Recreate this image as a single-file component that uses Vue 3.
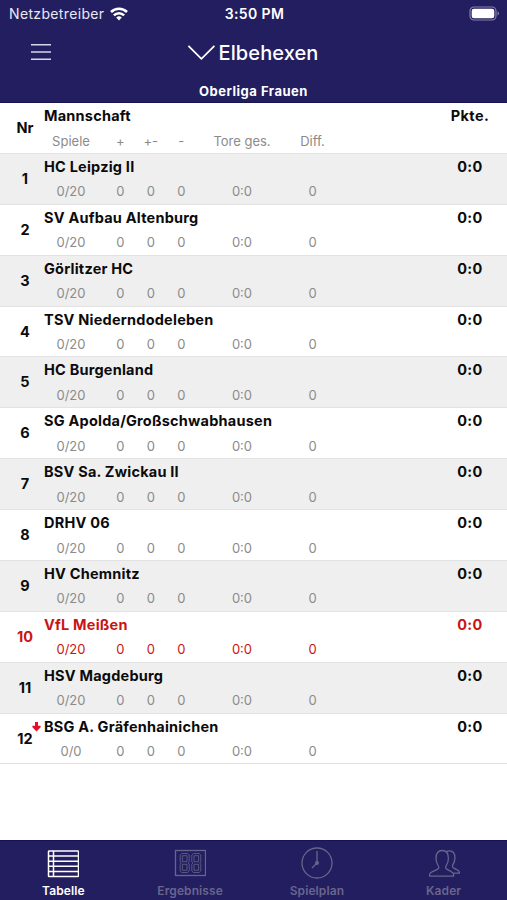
<script setup>
import { ref } from 'vue'

const activeTab = ref('Tabelle')

const tabs = ['Tabelle', 'Ergebnisse', 'Spielplan', 'Kader']

const teams = [
  { name: 'HC Leipzig II', games: '0/20' },
  { name: 'SV Aufbau Altenburg', games: '0/20' },
  { name: 'Görlitzer HC', games: '0/20' },
  { name: 'TSV Niederndodeleben', games: '0/20' },
  { name: 'HC Burgenland', games: '0/20' },
  { name: 'SG Apolda/Großschwabhausen', games: '0/20' },
  { name: 'BSV Sa. Zwickau II', games: '0/20' },
  { name: 'DRHV 06', games: '0/20' },
  { name: 'HV Chemnitz', games: '0/20' },
  { name: 'VfL Meißen', games: '0/20', own: true },
  { name: 'HSV Magdeburg', games: '0/20' },
  { name: 'BSG A. Gräfenhainichen', games: '0/0', down: true }
]
</script>

<template>
  <div class="screen">
    <header>
      <div class="status">
        <div class="carrier">
          <span>Netzbetreiber</span>
          <svg width="18" height="14" viewBox="0 0 18 14" fill="none" stroke="#fff" stroke-width="2.6">
            <path d="M1 5a11.4 11.4 0 0 1 16 0" />
            <path d="M3.9 8.3a7.2 7.2 0 0 1 10.2 0" />
            <path d="M9 13.4 6.2 10.6a4 4 0 0 1 5.6 0z" fill="#fff" stroke="none" />
          </svg>
        </div>
        <span class="time">3:50 PM</span>
        <svg class="battery" width="31" height="15" viewBox="0 0 31 15">
          <rect x="1" y="1" width="26" height="13" rx="4" fill="none" stroke="#8582ab" stroke-width="1.2" />
          <rect x="2.7" y="2.7" width="22.6" height="9.6" rx="2.3" fill="#fff" />
          <path d="M28.5 5.3q3 2.2 0 4.4z" fill="#8582ab" />
        </svg>
      </div>
      <div class="nav">
        <svg class="menu" width="20" height="18" viewBox="0 0 20 18" stroke="#d6d4ea" stroke-width="1.6">
          <path d="M0 .6h20M0 8h20M0 15.200h20" />
        </svg>
        <div class="title">
          <svg width="28" height="16" viewBox="0 0 28 16" fill="none" stroke="#fff" stroke-width="1.8">
            <path d="M.4 .8 13.400 13.800 26.400 .8" />
          </svg>
          <h1>Elbehexen</h1>
        </div>
      </div>
      <h2>Oberliga Frauen</h2>
    </header>

    <main>
      <div class="row head">
        <div class="nr">Nr</div>
        <div class="team">
          <div class="name">Mannschaft</div>
          <div class="stats">
            <span>Spiele</span><span>+</span><span>+-</span><span>-</span><span>Tore ges.</span><span>Diff.</span>
          </div>
        </div>
        <div class="points">Pkte.</div>
      </div>
      <div v-for="(team, i) in teams" :key="team.name" class="row" :class="{ own: team.own }">
        <div class="nr">
          {{ i + 1 }}
          <svg v-if="team.down" class="down" width="9" height="10" viewBox="0 0 9 10">
            <path d="M3 0h3v3.700h2.600v1.600L4.500 9.600.4 5.300V3.700H3z" fill="#e3122b" />
          </svg>
        </div>
        <div class="team">
          <div class="name">{{ team.name }}</div>
          <div class="stats">
            <span>{{ team.games }}</span><span>0</span><span>0</span><span>0</span><span>0:0</span><span>0</span>
          </div>
        </div>
        <div class="points">0:0</div>
      </div>
    </main>

    <nav class="tabs">
      <button
        v-for="tab in tabs"
        :key="tab"
        :class="{ active: tab === activeTab }"
        @click="activeTab = tab"
      >
        <svg width="32" height="32" viewBox="0 0 32 32" fill="none" stroke="currentColor" stroke-width="1.3">
          <template v-if="tab === 'Tabelle'">
            <rect x="1.5" y="4" width="30" height="25.5" rx="0.6" stroke-width="1.5" />
            <path d="M6.500 4v25.500M1.500 9.100h30M1.500 14.200h30M1.500 19.300h30M1.500 24.400h30" stroke-width="1.5" />
          </template>
          <template v-else-if="tab === 'Ergebnisse'">
            <rect x="1.5" y="3.5" width="30" height="25" />
            <!-- two seven-segment digits -->
            <g stroke-width="0.8">
              <path d="M7.800 6.500h5.700l1.700 1.500v6.800L14.200 16l1 1.200V24l-1.700 1.500H7.800L6.200 24v-6.800l1-1.200-1-1.200V8z" />
              <path d="M8.400 8.700h4.600v6H8.400zM8.400 17.300h4.600v6H8.400z" />
              <path d="M19.400 6.500h5.700l1.700 1.500v6.800L25.800 16l1 1.200V24l-1.700 1.500h-5.700L17.800 24v-6.800l1-1.200-1-1.200V8z" />
              <path d="M20 8.700h4.600v6H20zM20 17.300h4.600v6H20z" />
            </g>
          </template>
          <template v-else-if="tab === 'Spielplan'">
            <circle cx="16" cy="16" r="15" />
            <path d="M16 4v12l-5 5" />
            <circle cx="16" cy="16" r="1.3" fill="currentColor" />
          </template>
          <template v-else>
            <path d="M1.600 29.200v-1.400c0-1.600.8-2.300 2.400-3l4.400-1.900c2.600-1.100 2.900-2.600 1.700-4.400C8.700 16.300 8 14.300 8 11.200c0-5 2.200-7.700 6.200-7.700s6.200 2.700 6.200 7.700c0 3.100-.7 5.100-2.100 7.300-1.200 1.800-.9 3.300 1.700 4.400l3.400 1.900c1.400.7 2.200 1.400 2.200 3v1.400z" />
            <path d="M18 4.900c1.200-.9 2.400-1.200 3.700-1.100 3.500.2 5.200 2.700 5.200 6.900 0 2.800-.5 4.600-1.800 6.600-1.100 1.700-.8 3.200 1.200 4.100l3 1.500c1.500.7 2.200 1.400 2.200 3.300h-6" />
          </template>
        </svg>
        <span>{{ tab }}</span>
      </button>
    </nav>
  </div>
</template>

<style>
body {
  margin: 0;
  background: #fff;
}
</style>

<style scoped>
.screen {
  display: flex;
  flex-direction: column;
  width: 507px;
  height: 900px;
  overflow: hidden;
  font-family: Inter, 'Liberation Sans', sans-serif;
}

header {
  box-sizing: border-box;
  height: 103px;
  background: #231e5f;
  border-bottom: 1px solid #19144f;
  color: #fff;
  flex: none;
}

.status {
  display: grid;
  grid-template-columns: 1fr auto 1fr;
  align-items: center;
  height: 27px;
  padding: 0 7px 0 9px;
}

.carrier {
  display: flex;
  align-items: center;
  gap: 6px;
  color: #e9e8f4;
  font-size: 14px;
  letter-spacing: 0.35px;
}

.time {
  font-size: 14px;
  font-weight: 600;
  letter-spacing: 0.4px;
}

.battery {
  justify-self: end;
}

.nav {
  display: grid;
  grid-template-columns: 1fr auto 1fr;
  align-items: center;
  height: 52px;
  padding: 0 32px 0 31px;
}

.title {
  display: flex;
  align-items: center;
  gap: 3px;
}

h1 {
  margin: 0;
  font-size: 20px;
  font-weight: 500;
  letter-spacing: 0.1px;
}

h2 {
  margin: 0;
  font-size: 13px;
  font-weight: 700;
  line-height: 24px;
  letter-spacing: 0.5px;
  text-align: center;
}

main {
  flex: 1;
}

.row {
  box-sizing: border-box;
  display: grid;
  grid-template-columns: 44px 1fr 74px;
  height: 50.88px;
  border-bottom: 1px solid #e2e2e2;
  color: #0b0b0b;
  font-size: 14.5px;
  font-weight: 700;
}

.row:nth-child(even) {
  background: #efefef;
}

.nr {
  position: relative;
  padding-left: 6px;
  line-height: 50.5px;
  text-align: center;
}

.down {
  position: absolute;
  top: 8px;
  right: 3px;
}

.name {
  height: 25.5px;
  line-height: 26.4px;
  letter-spacing: 0.22px;
}

.points {
  line-height: 25px;
  letter-spacing: 0.4px;
  text-align: center;
}

.stats {
  display: grid;
  grid-template-columns: 61px 30.5px 30.5px 30.5px 91px 50px;
  color: #8b8b8b;
  font-size: 13px;
  font-weight: 400;
  line-height: 24px;
  text-align: center;
}

.stats span:first-child {
  width: 54px;
}

.own,
.own .stats {
  color: #c91414;
}

.tabs {
  box-sizing: border-box;
  display: grid;
  grid-template-columns: repeat(4, 1fr);
  height: 60px;
  background: #231e5f;
  border-top: 1px solid #19144f;
}

.tabs button {
  display: flex;
  flex-direction: column;
  align-items: center;
  gap: 4px;
  padding: 6px 0 0;
  border: 0;
  background: none;
  color: #68658d;
  font: 600 12px Inter, 'Liberation Sans', sans-serif;
  letter-spacing: 0.1px;
}

.tabs .active {
  color: #fff;
}
</style>
